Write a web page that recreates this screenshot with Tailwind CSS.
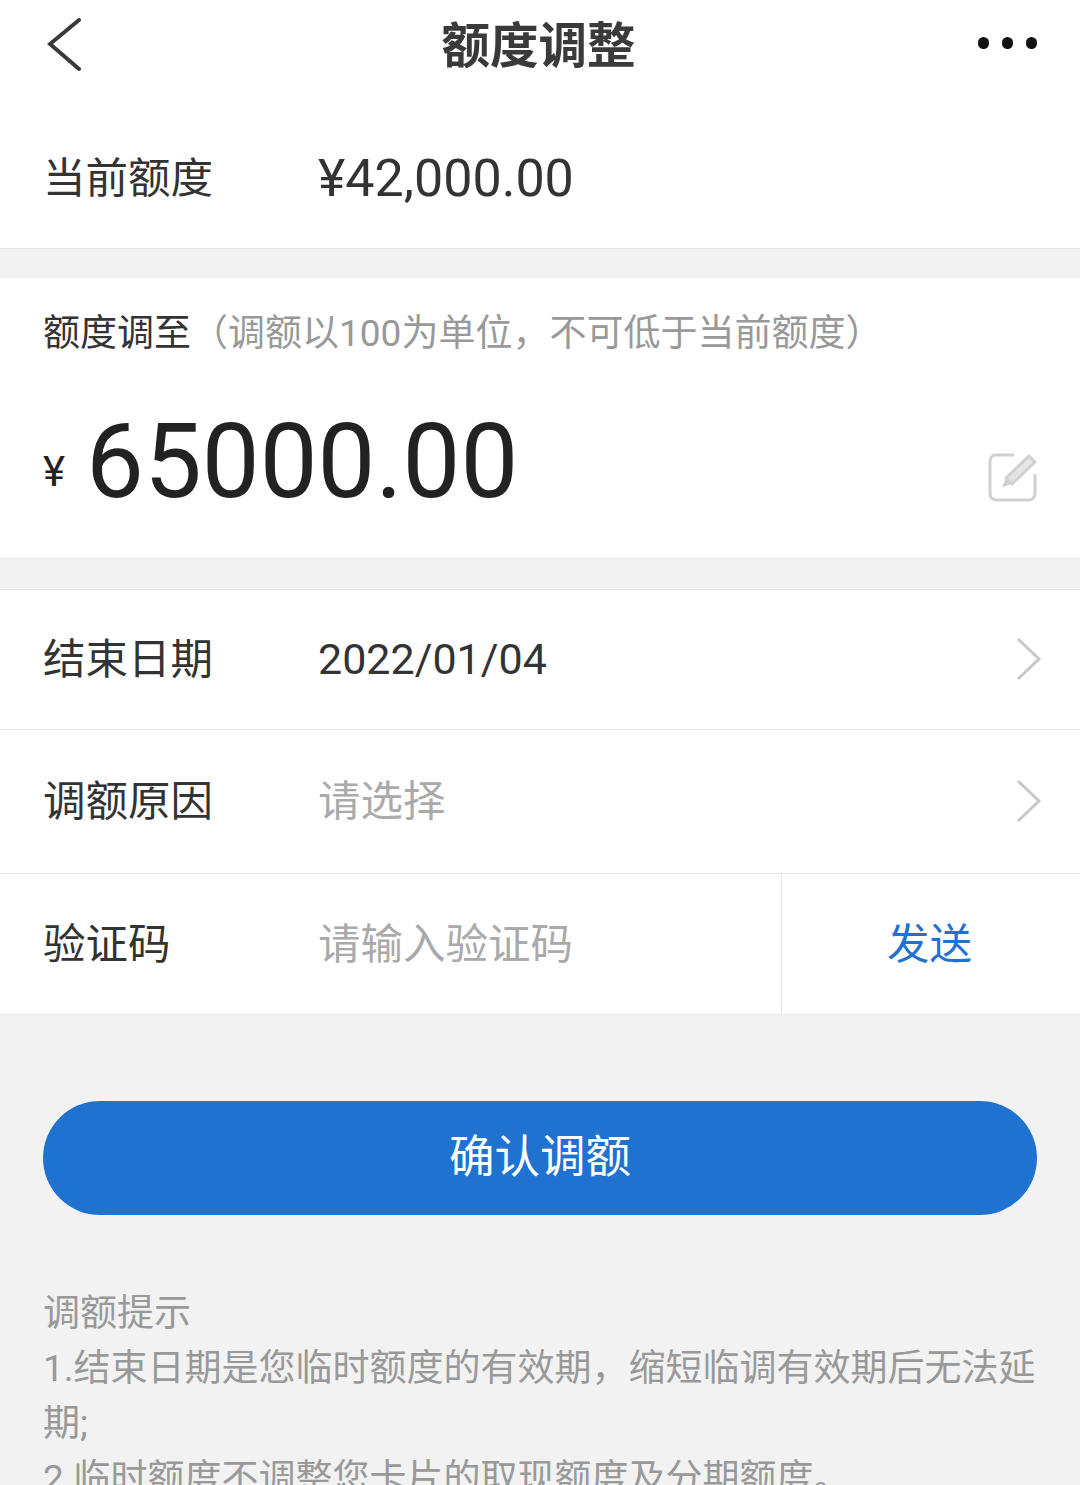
<!DOCTYPE html>
<html lang="zh-CN">
<head>
    <meta charset="UTF-8">
    <meta name="viewport" content="width=device-width, initial-scale=1.0">
    <title>额度调整</title>
    <script src="https://cdn.jsdelivr.net/npm/@tailwindcss/browser@4"></script>
</head>
<body class="w-[1080px] h-[1485px] overflow-hidden bg-[#f2f2f2] font-['Roboto','Noto_Sans_CJK_SC',sans-serif]">

    <!-- Header -->
    <header class="h-[90px] bg-white grid grid-cols-3 items-center pl-[47px] pr-[42px]">
        <svg class="w-[36px] h-[56px]" viewBox="0 0 36 56" fill="none" stroke="#3a3a3a" stroke-width="4" stroke-linecap="round"><path d="M32 3 L3 27 L32 52"/></svg>
        <h1 class="text-[48.5px] leading-none font-bold text-[#3a3a3a] text-center whitespace-nowrap mt-[5px] mr-[8px]">额度调整</h1>
        <div class="flex gap-[13px] justify-end mt-[-5px] pr-[1px]">
            <span class="w-[11px] h-[12px] rounded-full bg-[#111]"></span>
            <span class="w-[11px] h-[12px] rounded-full bg-[#111]"></span>
            <span class="w-[11px] h-[12px] rounded-full bg-[#111]"></span>
        </div>
    </header>

    <!-- Current limit -->
    <section class="h-[159px] bg-white border-b border-[#e6e6e6] flex items-center pl-[43px] pt-[19px]">
        <span class="w-[275px] text-[42.5px] text-[#333]">当前额度</span>
        <span class="text-[52px] text-[#333]">¥42,000.00</span>
    </section>

    <!-- Adjust to -->
    <section class="mt-[29px] h-[281px] bg-white border-b border-[#e6e6e6] pl-[43px] pr-[42px] pt-[32px]">
        <p class="text-[37px] leading-[48px] text-[#333] whitespace-nowrap">额度调至<span class="text-[#999]">（调额以100为单位，不可低于当前额度）</span></p>
        <div class="mt-[41px] flex items-center justify-between">
            <div class="flex items-center">
                <span class="text-[42px] text-[#222] mt-[18px] w-[43px]">¥</span>
                <span class="text-[103px] leading-[126px] text-[#222]">65000.00</span>
            </div>
            <svg class="w-[50px] h-[50px] mt-[30px]" viewBox="0 0 50 50" fill="none" stroke="#d0d0d0" stroke-width="3"><path d="M26 3 H8 a6 6 0 0 0 -6 6 V42 a6 6 0 0 0 6 6 H41 a6 6 0 0 0 6 -6 V22"/><path d="M18 26 L41 4 L47 10 L24 32 Z" fill="#e4e4e4" stroke-linejoin="round"/><path d="M14 35 L18 26 L24 32 Z" fill="#d0d0d0" stroke="none"/></svg>
        </div>
    </section>

    <!-- Form rows -->
    <section class="mt-[30px] bg-white border-t border-b border-[#e6e6e6]">
        <div class="h-[140px] border-b border-[#e6e6e6] flex items-center pl-[43px] pr-[38px]">
            <span class="w-[275px] text-[42.5px] text-[#333]">结束日期</span>
            <span class="flex-1 text-[43px] text-[#333]">2022/01/04</span>
            <svg class="w-[26px] h-[44px] mb-[2px]" viewBox="0 0 26 44" fill="none" stroke="#c8c8c8" stroke-width="3"><path d="M2 2 L23 22 L2 42"/></svg>
        </div>
        <div class="h-[144px] border-b border-[#e6e6e6] flex items-center pl-[43px] pr-[38px] pt-[1px]">
            <span class="w-[275px] text-[42.5px] text-[#333]">调额原因</span>
            <span class="flex-1 text-[42.5px] text-[#aaa]">请选择</span>
            <svg class="w-[26px] h-[44px] mb-[2px]" viewBox="0 0 26 44" fill="none" stroke="#c8c8c8" stroke-width="3"><path d="M2 2 L23 22 L2 42"/></svg>
        </div>
        <div class="h-[140px] flex items-stretch pl-[43px]">
            <div class="w-[738px] flex items-center pt-[2px]">
                <span class="w-[275px] text-[42.5px] text-[#333]">验证码</span>
                <span class="text-[42.5px] text-[#aaa]">请输入验证码</span>
            </div>
            <div class="flex-1 border-l border-[#e6e6e6] flex items-center justify-center text-[42.5px] text-[#1f72d0] pr-[3px] pt-[2px]">发送</div>
        </div>
    </section>

    <!-- Confirm -->
    <div class="mt-[86px] px-[43px]">
        <button class="w-full h-[114px] rounded-full bg-[#1f72d0] text-white text-[45.5px]">确认调额</button>
    </div>

    <!-- Tips -->
    <div class="mt-[71px] pl-[43px] pr-[42px] text-[37px] leading-[55px] text-[#999]">
        <p>调额提示</p>
        <p>1.结束日期是您临时额度的有效期，缩短临调有效期后无法延期;</p>
        <p>2.临时额度不调整您卡片的取现额度及分期额度。</p>
    </div>

</body>
</html>
